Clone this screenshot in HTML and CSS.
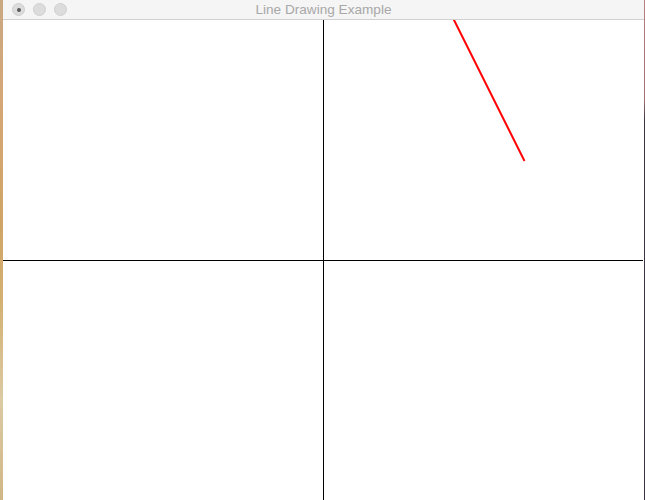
FILE: index.html
```html
<!DOCTYPE html>
<html>
<head>
<meta charset="utf-8">
<title>Line Drawing Example</title>
<link rel="stylesheet" href="styles.css">
</head>
<body>
<div class="screen">
  <div class="desk-left"></div>
  <div class="window">
    <div class="titlebar">
      <div class="lights">
        <span class="light light-close"><span class="dot"></span></span>
        <span class="light"></span>
        <span class="light"></span>
      </div>
      <div class="title">Line Drawing Example</div>
    </div>
    <svg class="canvas" width="640" height="480" viewBox="0 0 640 480">
      <line x1="320.5" y1="0" x2="320.5" y2="480" stroke="#000" stroke-width="1"/>
      <line x1="0" y1="240.5" x2="640" y2="240.5" stroke="#000" stroke-width="1"/>
      <line x1="450" y1="-2" x2="521.5" y2="141" stroke="#ff0000" stroke-width="2"/>
    </svg>
  </div>
  <div class="desk-right"></div>
</div>
</body>
</html>
```
FILE: styles.css
```css
html, body {
  margin: 0;
  padding: 0;
  width: 645px;
  height: 500px;
  overflow: hidden;
  background: #fff;
}
.screen {
  display: flex;
  width: 645px;
  height: 500px;
}
.desk-left {
  width: 3px;
  flex: none;
  background: linear-gradient(to bottom, #c9a882 0%, #d4a676 20%, #cfa565 45%, #d3b072 60%, #dccaa2 80%, #d0b686 100%);
}
.desk-right {
  width: 1px;
  flex: none;
  background: linear-gradient(to bottom, #b48080 0%, #a07070 20%, #3c3340 24%, #3a3242 100%);
}
.window {
  width: 641px;
  flex: none;
  display: flex;
  flex-direction: column;
  background: #fff;
  overflow: hidden;
}
.titlebar {
  height: 19px;
  flex: none;
  background: #f5f5f5;
  border-bottom: 1px solid #d1d1d1;
  position: relative;
  display: flex;
  align-items: center;
  justify-content: center;
}
.lights {
  position: absolute;
  left: 9px;
  top: 3px;
  display: flex;
  gap: 8px;
}
.light {
  width: 11px;
  height: 11px;
  border-radius: 50%;
  background: #dcdcdc;
  border: 0.5px solid #cfcfcf;
  display: flex;
  align-items: center;
  justify-content: center;
}
.dot {
  width: 4px;
  height: 4px;
  border-radius: 50%;
  background: #5a5a5a;
}
.title {
  font-family: "Liberation Sans", Arial, sans-serif;
  font-size: 13.6px;
  color: #a8a8a8;
  line-height: 19px;
}
.canvas {
  display: block;
  flex: none;
}
```
